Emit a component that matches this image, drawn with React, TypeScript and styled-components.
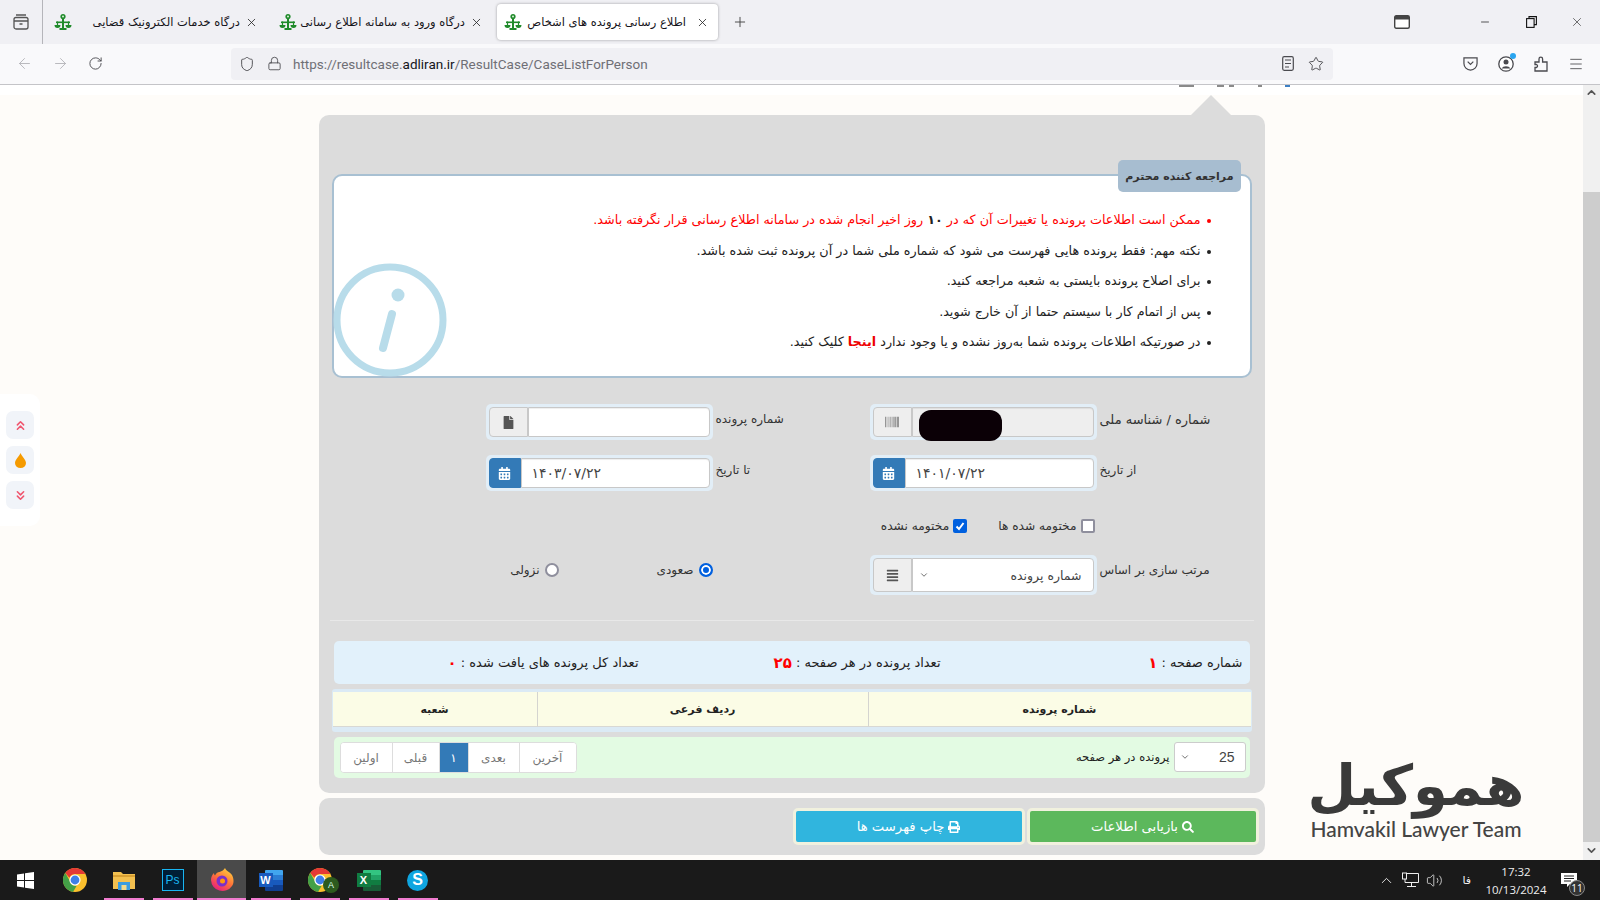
import React from "react"
import {createGlobalStyle, styled} from "styled-components"
import {
  ArrowLeft, ArrowRight, RotateCw, Shield, Lock, Star, Menu, Plus, X, Minus,
  ChevronUp, ChevronDown, ChevronsUp, ChevronsDown, Volume2,
} from "lucide-react"
import {FaBarcode, FaCalendarAlt, FaFile, FaAlignJustify, FaPrint, FaSearch} from "react-icons/fa"

const GlobalStyle = createGlobalStyle`
  html, body {
    margin: 0;
    padding: 0;
    height: 100%;
    overflow: hidden;
    font-family: "DejaVu Sans", "Liberation Sans", sans-serif;
  }
  * { box-sizing: border-box; }
`

const ScalesIcon = () => (
  <svg width="18" height="18" viewBox="0 0 18 18">
    <rect x="8" y="5" width="2" height="10" fill="#1f8a2a" />
    <circle cx="9" cy="3.5" r="2.6" fill="#1f8a2a" />
    <circle cx="9" cy="3.5" r="1" fill="#dff3df" />
    <path d="M2 8.5h14v1.6H2z" fill="#1f8a2a" />
    <path d="M0.5 12h6a3 3 0 0 1-6 0zM11.5 12h6a3 3 0 0 1-6 0z" fill="#1f8a2a" />
    <path d="M3.5 8.5v4M14.5 8.5v4" stroke="#1f8a2a" strokeWidth="1.2" />
    <rect x="5.5" y="15" width="7" height="2" fill="#1f8a2a" />
  </svg>
)

const ChromeIcon = () => (
  <svg width="24" height="24" viewBox="0 0 24 24">
    <circle cx="12" cy="12" r="12" fill="#fbc02d" />
    <path d="M12 0a12 12 0 0 1 10.4 6H12a6 6 0 0 0-5.6 3.8L2.3 5A12 12 0 0 1 12 0z" fill="#e53935" />
    <path d="M2.3 5l5 8.7a5.6 5.6 0 0 0 6.4 4.1L10 24A12 12 0 0 1 2.3 5z" fill="#43a047" />
    <circle cx="12" cy="12" r="5.6" fill="#fff" />
    <circle cx="12" cy="12" r="4.4" fill="#3f7fe8" />
  </svg>
)

const FolderIcon = () => (
  <svg width="22" height="20" viewBox="0 0 22 20">
    <path d="M0 2h8l2 2h12v15H0z" fill="#f3c04f" />
    <rect y="5" width="22" height="2" fill="#d9a033" />
    <rect x="5" y="12" width="12" height="8" fill="#3a9ce0" />
    <rect x="8.5" y="15" width="5" height="5" fill="#f3d98a" />
  </svg>
)

const FirefoxIcon = () => (
  <svg width="24" height="24" viewBox="0 0 24 24">
    <defs>
      <linearGradient id="fx" x1="0.8" y1="0" x2="0.2" y2="1">
        <stop offset="0" stopColor="#ffd43b" />
        <stop offset="0.5" stopColor="#ff7139" />
        <stop offset="1" stopColor="#e31587" />
      </linearGradient>
    </defs>
    <path d="M15 0c1 3 5 4 7 7 2 4 2 8 0 11a11.500 11.500 0 0 1-21 -6c0-3 1-5 3-7 0 1 .5 2 1 2.500C6 5 8 4 9.500 4 12 3 14 2 15 0z" fill="url(#fx)" />
    <circle cx="12" cy="13" r="5.500" fill="#7b2fc9" />
    <circle cx="12.500" cy="13" r="2.500" fill="#ff980e" />
  </svg>
)

const WordIcon = () => (
  <OfficeBox>
    <OfficeStack>
      <OfficeBand $color="#41a5ee" />
      <OfficeBand $color="#2b7cd3" />
      <OfficeBand $color="#185abd" />
      <OfficeBand $color="#103f91" />
    </OfficeStack>
    <OfficeLetter $color="#185abd">W</OfficeLetter>
  </OfficeBox>
)

const ExcelIcon = () => (
  <OfficeBox>
    <OfficeStack>
      <OfficeBand $color="#33c481" />
      <OfficeBand $color="#21a366" />
      <OfficeBand $color="#107c41" />
      <OfficeBand $color="#185c37" />
    </OfficeStack>
    <OfficeLetter $color="#107c41">X</OfficeLetter>
  </OfficeBox>
)

const CheckMark = () => (
  <svg width="10" height="10" viewBox="0 0 10 10">
    <path d="M1.500 5.500l2.500 2.500 4.500-6" fill="none" stroke="#fff" strokeWidth="2" />
  </svg>
)

const InfoMark = () => (
  <svg width="116" height="116" viewBox="0 0 116 116">
    <circle cx="58" cy="58" r="53" fill="#fff" stroke="#b8dcea" strokeWidth="7" />
    <circle cx="66" cy="33" r="6.500" fill="#b8dcea" />
    <path d="M60 52L51 86" stroke="#b8dcea" strokeWidth="8" strokeLinecap="round" />
  </svg>
)

const Tab = ({title, active}: {title: string; active?: boolean}) => (
  <TabBody $active={active}>
    <ScalesIcon />
    <TabTitle $active={active}>{title}</TabTitle>
    <X size={13} strokeWidth={1.5} color="#222" />
  </TabBody>
)

const NOTES = [
  "نکته مهم: فقط پرونده هایی فهرست می شود که شماره ملی شما در آن پرونده ثبت شده باشد.",
  "برای اصلاح پرونده بایستی به شعبه مراجعه کنید.",
  "پس از اتمام کار با سیستم حتما از آن خارج شوید.",
]

const PAGES = [
  {label: "آخرین", width: 57},
  {label: "بعدی", width: 51},
  {label: "۱", width: 29, active: true},
  {label: "قبلی", width: 47},
  {label: "اولین", width: 51},
]

// cut-off bits of the page header, right to left
const CUT_MARKS = [
  {width: 5, gap: 23, color: "#3d7fc4"},
  {width: 4, gap: 24, color: "#8a8a8a"},
  {width: 5, gap: 5, color: "#8a8a8a"},
  {width: 7, gap: 23, color: "#8a8a8a"},
  {width: 15, gap: 3, color: "#8a8a8a"},
]

export default function App() {
  return (
    <Screen>
      <GlobalStyle />
      <TabStrip>
        <SideButton>
          <svg width="16" height="16" viewBox="0 0 16 16" fill="none" stroke="#555" strokeWidth="1.300">
            <rect x="1" y="3.500" width="14" height="11.500" rx="2" />
            <path d="M3 1h10M1 7h14M6.500 10h3" />
          </svg>
        </SideButton>
        <TabPlain><Tab title="درگاه خدمات الکترونیک قضایی" /></TabPlain>
        <TabPlain $after={4}><Tab title="درگاه ورود به سامانه اطلاع رسانی" /></TabPlain>
        <Tab title="اطلاع رسانی پرونده های اشخاص" active />
        <NewTab><Plus size={16} strokeWidth={1.400} color="#444" /></NewTab>
        <WindowControls>
          <svg width="16" height="14" viewBox="0 0 16 14">
            <rect x="0.700" y="0.700" width="14.600" height="12.600" rx="1.500" fill="#fff" stroke="#444" strokeWidth="1.400" />
            <rect x="1" y="1" width="14" height="3.500" fill="#444" />
          </svg>
          <WindowButtons>
            <Minus size={12} strokeWidth={1.400} color="#111" />
            <svg width="11" height="12" viewBox="0 0 11 12" fill="none" stroke="#111" strokeWidth="1.100">
              <rect x="0.600" y="2.600" width="7.500" height="8.800" />
              <path d="M3 2.500V0.600h7.400v8H8" />
            </svg>
            <CloseSlot><X size={14} strokeWidth={1} color="#111" /></CloseSlot>
          </WindowButtons>
        </WindowControls>
      </TabStrip>

      <Toolbar>
        <NavButtons>
          <ArrowLeft size={17} strokeWidth={1.300} color="#b4b4b8" />
          <ArrowRight size={17} strokeWidth={1.300} color="#b4b4b8" />
          <RotateCw size={15} strokeWidth={1.500} color="#4a4a4f" />
        </NavButtons>
        <UrlBar>
          <Shield size={16} strokeWidth={1.400} color="#4a4a4f" />
          <Lock size={15} strokeWidth={1.400} color="#4a4a4f" />
          <UrlText>https://resultcase.<b>adliran.ir</b>/ResultCase/CaseListForPerson</UrlText>
          <UrlEnd>
            <svg width="12" height="15" viewBox="0 0 12 15" fill="none" stroke="#4a4a4f" strokeWidth="1.200">
              <rect x="0.700" y="0.700" width="10.600" height="13.600" rx="1.500" />
              <path d="M3 4h6M3 7.500h6M3 11h4" />
            </svg>
            <Star size={16} strokeWidth={1.400} color="#4a4a4f" />
          </UrlEnd>
        </UrlBar>
        <ToolIcons>
          <svg width="15" height="15" viewBox="0 0 16 16" fill="none" stroke="#4a4a4f" strokeWidth="1.300">
            <path d="M1 2h14v6a7 7 0 0 1-14 0z" />
            <path d="M5 6l3 3 3-3" />
          </svg>
          <AccountIcon>
            <svg width="16" height="16" viewBox="0 0 16 16">
              <circle cx="8" cy="8" r="7.200" fill="#fff" stroke="#4a4a4f" strokeWidth="1.300" />
              <circle cx="8" cy="6" r="2.500" fill="#4a4a4f" />
              <path d="M3.500 12.500a5 4 0 0 1 9 0z" fill="#4a4a4f" />
            </svg>
            <AccountDot />
          </AccountIcon>
          <svg width="14" height="16" viewBox="0 0 14 16" fill="none" stroke="#4a4a4f" strokeWidth="1.300">
            <path d="M1 6h4V3a1.800 1.800 0 0 1 3.600 0v3H13v9H1v-3.500h1.500a1.600 1.600 0 0 0 0-3H1z" />
          </svg>
          <Menu size={16} strokeWidth={1.300} color="#4a4a4f" />
        </ToolIcons>
      </Toolbar>

      <Viewport>
        <Page dir="rtl">
          <CutStrip>
            {CUT_MARKS.map(({width, gap, color}, i) => <CutMark key={i} $width={width} $gap={gap} $color={color} />)}
          </CutStrip>
          <Panel>
            <PanelArrow />
            <InfoBox>
              <InfoBadge>مراجعه کننده محترم</InfoBadge>
              <InfoIcon><InfoMark /></InfoIcon>
              <NoteList>
                <NoteItem $red>ممکن است اطلاعات پرونده یا تغییرات آن که در <Dark>۱۰</Dark> روز اخیر انجام شده در سامانه اطلاع رسانی قرار نگرفته باشد.</NoteItem>
                {NOTES.map((note) => <NoteItem key={note}>{note}</NoteItem>)}
                <NoteItem>در صورتیکه اطلاعات پرونده شما به‌روز نشده و یا وجود ندارد <ClickHere>اینجا</ClickHere> کلیک کنید.</NoteItem>
              </NoteList>
            </InfoBox>

            <FormRow $top={26}>
              <Field>
                <FieldLabel $width={116} $size={13}>شماره / شناسه ملی</FieldLabel>
                <InputGroup>
                  <InputValue $disabled><Redacted /></InputValue>
                  <Addon><FaBarcode size={14} color="#777" /></Addon>
                </InputGroup>
              </Field>
              <Field>
                <FieldLabel $width={70}>شماره پرونده</FieldLabel>
                <InputGroup>
                  <InputValue />
                  <Addon><FaFile size={13} color="#555" /></Addon>
                </InputGroup>
              </Field>
            </FormRow>

            <FormRow $top={15}>
              <Field>
                <FieldLabel $width={116}>از تاریخ</FieldLabel>
                <InputGroup>
                  <InputValue><DateText>۱۴۰۱/۰۷/۲۲</DateText></InputValue>
                  <Addon $blue><FaCalendarAlt size={13} color="#fff" /></Addon>
                </InputGroup>
              </Field>
              <Field>
                <FieldLabel $width={70}>تا تاریخ</FieldLabel>
                <InputGroup>
                  <InputValue><DateText>۱۴۰۳/۰۷/۲۲</DateText></InputValue>
                  <Addon $blue><FaCalendarAlt size={13} color="#fff" /></Addon>
                </InputGroup>
              </Field>
            </FormRow>

            <CheckRow>
              <CheckItem><CheckBox />مختومه شده ها</CheckItem>
              <CheckItem><CheckBox $checked><CheckMark /></CheckBox>مختومه نشده</CheckItem>
            </CheckRow>

            <FormRow $top={21}>
              <Field>
                <FieldLabel $width={116}>مرتب سازی بر اساس</FieldLabel>
                <InputGroup $tall>
                  <SelectValue>شماره پرونده<ChevronDown size={10} color="#555" /></SelectValue>
                  <Addon><FaAlignJustify size={13} color="#555" /></Addon>
                </InputGroup>
              </Field>
              <RadioRow>
                <RadioItem><Radio $on />صعودی</RadioItem>
                <RadioItem><Radio />نزولی</RadioItem>
              </RadioRow>
            </FormRow>

            <Divider />

            <SummaryBar>
              <SummaryItem $width={302}>شماره صفحه : <Count>۱</Count></SummaryItem>
              <SummaryItem $width={302}>تعداد پرونده در هر صفحه : <Count>۲۵</Count></SummaryItem>
              <SummaryItem>تعداد کل پرونده های یافت شده : <Count>۰</Count></SummaryItem>
            </SummaryBar>

            <TableWrap>
              <HeadCell $width={383}>شماره پرونده</HeadCell>
              <HeadCell $width={331}>ردیف فرعی</HeadCell>
              <HeadCell>شعبه</HeadCell>
            </TableWrap>

            <PagerBar>
              <PageSize>
                <SizeSelect>25<ChevronDown size={10} color="#555" /></SizeSelect>
                پرونده در هر صفحه
              </PageSize>
              <Pager>
                {PAGES.map(({label, width, active}) => <PageLink key={label} $width={width} $active={active}>{label}</PageLink>)}
              </Pager>
            </PagerBar>
          </Panel>

          <ButtonPanel>
            <ActionButton $color="#5cb85c"><FaSearch size={12} />بازیابی اطلاعات</ActionButton>
            <ActionButton $color="#30b5de"><FaPrint size={12} />چاپ فهرست ها</ActionButton>
          </ButtonPanel>

          <Logo dir="rtl">
            <LogoMark>هموکیل</LogoMark>
            <LogoCaption>Hamvakil Lawyer Team</LogoCaption>
          </Logo>
        </Page>

        <SideDock>
          <DockButton><ChevronsUp size={15} strokeWidth={2.500} color="#f0566f" /></DockButton>
          <DockButton>
            <svg width="11" height="17" viewBox="0 0 13 18">
              <path d="M6.500 0C8 4 13 7.500 13 12a6.500 6 0 0 1-13 0C0 7.500 5 4 6.500 0z" fill="#f59a00" />
            </svg>
          </DockButton>
          <DockButton><ChevronsDown size={15} strokeWidth={2.500} color="#f0566f" /></DockButton>
        </SideDock>

        <ScrollBar>
          <ChevronUp size={13} strokeWidth={3} color="#555" />
          <ScrollThumb />
          <ChevronDown size={13} strokeWidth={3} color="#555" />
        </ScrollBar>
      </Viewport>

      <Taskbar>
        <StartButton>
          <svg width="17" height="17" viewBox="0 0 17 17" fill="#fff">
            <path d="M0 2.500l7-1v6.500H0zM8 1.300L17 0v8H8zM0 9h7v6.500l-7-1zM8 9h9v8l-9-1.300z" />
          </svg>
        </StartButton>
        <TaskIcons>
          <TaskItem><ChromeIcon /></TaskItem>
          <TaskItem $underline><FolderIcon /></TaskItem>
          <TaskItem $underline><PsIcon>Ps</PsIcon></TaskItem>
          <TaskItem $underline $active><FirefoxIcon /></TaskItem>
          <TaskItem $underline><WordIcon /></TaskItem>
          <TaskItem $underline>
            <ChromeIcon />
            <ProfileBadge>A</ProfileBadge>
          </TaskItem>
          <TaskItem $underline><ExcelIcon /></TaskItem>
          <TaskItem $underline><SkypeIcon>S</SkypeIcon></TaskItem>
        </TaskIcons>
        <Tray>
          <ChevronUp size={17} strokeWidth={1.300} color="#eee" />
          <svg width="17" height="16" viewBox="0 0 17 16" fill="none" stroke="#eee" strokeWidth="1">
            <path d="M3 1.500h13.500v9H3zM9.500 10.500v3.500M5 14.500h9" />
            <rect x="0.500" y="1" width="4" height="6" fill="#1a1a1a" />
          </svg>
          <Volume2 size={17} strokeWidth={1.100} color="#eee" />
          <Lang dir="rtl">فا</Lang>
          <Clock>
            <span>17:32</span>
            <span>10/13/2024</span>
          </Clock>
          <Notice>
            <svg width="16" height="14" viewBox="0 0 16 14">
              <path d="M0 0h16v11H9l-3 3v-3H0z" fill="#fff" />
              <path d="M3 3h10M3 5.500h10M3 8h7" stroke="#222" strokeWidth="1" />
            </svg>
            <NoticeCount>11</NoticeCount>
          </Notice>
        </Tray>
      </Taskbar>
    </Screen>
  )
}

const Screen = styled.div`
  width: 1600px;
  height: 900px;
  display: flex;
  flex-direction: column;
  overflow: hidden;
  background: #fefcf9;
`

const TabStrip = styled.div`
  height: 44px;
  flex: none;
  display: flex;
  align-items: center;
  background: #f0f0f4;
`

const SideButton = styled.div`
  width: 43px;
  height: 44px;
  flex: none;
  display: flex;
  align-items: center;
  justify-content: center;
  border-right: 1px solid #b5b5ba;
`

const TabPlain = styled.div<{$after?: number}>`
  width: 225px;
  flex: none;
  margin-right: ${({$after}) => $after ?? 0}px;
  & > div { width: 100%; }
`

const TabBody = styled.div<{$active?: boolean}>`
  width: 221px;
  height: 36px;
  flex: none;
  display: flex;
  align-items: center;
  padding: ${({$active}) => ($active ? "0 9px 0 7px" : "0 10px 0 11px")};
  column-gap: 5px;
  border-radius: 4px;
  background: ${({$active}) => ($active ? "#fff" : "transparent")};
  box-shadow: ${({$active}) => ($active ? "0 0 3px rgba(0,0,0,.35)" : "none")};
`

const TabTitle = styled.div<{$active?: boolean}>`
  flex: 1;
  min-width: 0;
  font-size: 11.500px;
  color: #15141a;
  white-space: nowrap;
  direction: rtl;
  text-align: right;
  margin-right: ${({$active}) => ($active ? 5 : 0)}px;
`

const NewTab = styled.div`
  width: 44px;
  display: flex;
  justify-content: center;
`

const WindowControls = styled.div`
  margin-left: auto;
  display: flex;
  align-items: center;
  column-gap: 69px;
  padding-right: 16px;
`

const WindowButtons = styled.div`
  display: flex;
  align-items: center;
  column-gap: 35px;
`

const CloseSlot = styled.div`
  display: flex;
  margin-left: -2px;
`

const Toolbar = styled.div`
  height: 41px;
  flex: none;
  display: flex;
  align-items: center;
  background: #f9f9fb;
  border-bottom: 1px solid #c4c4c8;
  padding-bottom: 1px;
`

const NavButtons = styled.div`
  width: 231px;
  flex: none;
  display: flex;
  align-items: center;
  column-gap: 19px;
  padding-left: 16px;
`

const UrlBar = styled.div`
  width: 1102px;
  height: 32px;
  flex: none;
  display: flex;
  align-items: center;
  column-gap: 12px;
  padding: 0 9px 0 8px;
  border-radius: 4px;
  background: #f0f0f4;
`

const UrlText = styled.div`
  font-family: Roboto, "Liberation Sans", sans-serif;
  font-size: 13.500px;
  color: #6f6f76;
  margin-left: -1px;
  b { font-weight: 400; color: #15141a; }
`

const UrlEnd = styled.div`
  margin-left: auto;
  display: flex;
  align-items: center;
  column-gap: 14px;
`

const ToolIcons = styled.div`
  flex: 1;
  display: flex;
  align-items: center;
  justify-content: flex-end;
  column-gap: 20px;
  padding-right: 16px;
`

const AccountIcon = styled.div`
  position: relative;
  display: flex;
`

const AccountDot = styled.div`
  position: absolute;
  top: -3px;
  right: -2px;
  width: 6px;
  height: 6px;
  border-radius: 50%;
  background: #2aa5f0;
`

const Viewport = styled.div`
  flex: 1;
  position: relative;
  display: flex;
  min-height: 0;
`

const Page = styled.div`
  flex: 1;
  position: relative;
  display: flex;
  flex-direction: column;
  align-items: center;
  min-width: 0;
`

const CutStrip = styled.div`
  align-self: stretch;
  height: 10px;
  flex: none;
  display: flex;
  align-items: flex-start;
  padding-right: 293px;
  background: #fff;
`

const CutMark = styled.div<{$width: number; $gap: number; $color: string}>`
  width: ${({$width}) => $width}px;
  height: 2px;
  margin-left: ${({$gap}) => $gap}px;
  background: ${({$color}) => $color};
`

const Panel = styled.div`
  width: 946px;
  flex: none;
  position: relative;
  margin-top: 20px;
  height: 678px;
  padding: 59px 13px 0;
  border-radius: 10px;
  background: #dcdcdc;
`

const PanelArrow = styled.div`
  position: absolute;
  top: -20px;
  right: 34px;
  width: 0;
  height: 0;
  border-left: 20px solid transparent;
  border-right: 20px solid transparent;
  border-bottom: 20px solid #dcdcdc;
`

const InfoBox = styled.div`
  position: relative;
  height: 204px;
  padding-top: 29px;
  border: 2px solid #a8c0d2;
  border-radius: 10px;
  background: #fff;
`

const InfoBadge = styled.div`
  position: absolute;
  top: -16px;
  right: 9px;
  height: 32px;
  display: flex;
  align-items: center;
  padding: 0 7px;
  border-radius: 5px;
  background: #a7bdd0;
  color: #333;
  font-size: 11px;
  font-weight: 700;
`

const InfoIcon = styled.div`
  position: absolute;
  left: -2px;
  bottom: -2px;
  display: flex;
`

const NoteList = styled.ul`
  position: relative;
  margin: 0;
  padding: 0 49px 0 0;
  list-style: none;
`

const NoteItem = styled.li<{$red?: boolean}>`
  position: relative;
  height: 30.500px;
  line-height: 30.500px;
  font-size: 12.750px;
  color: ${({$red}) => ($red ? "#f00" : "#222")};
  white-space: nowrap;

  &::before {
    content: "";
    position: absolute;
    right: -10px;
    top: 14px;
    width: 4px;
    height: 4px;
    border-radius: 50%;
    background: ${({$red}) => ($red ? "#f00" : "#222")};
  }
`

const Dark = styled.b`
  color: #222;
`

const ClickHere = styled.b`
  color: #e00;
`

const FormRow = styled.div<{$top: number}>`
  display: flex;
  align-items: flex-start;
  column-gap: 87px;
  margin-top: ${({$top}) => $top}px;
  padding-right: 39px;
`

const Field = styled.div`
  display: flex;
  align-items: flex-start;
`

const FieldLabel = styled.div<{$width: number; $size?: number}>`
  width: ${({$width}) => $width}px;
  flex: none;
  display: flex;
  align-items: center;
  justify-content: flex-end;
  height: 30px;
  padding-left: 3px;
  white-space: nowrap;
  color: #333;
  font-size: ${({$size}) => $size ?? 12}px;
`

const InputGroup = styled.div<{$tall?: boolean}>`
  width: 227px;
  flex: none;
  display: flex;
  height: ${({$tall}) => ($tall ? 40 : 36)}px;
  padding: 3px;
  border-radius: 5px;
  background: #e2eef7;
`

const Addon = styled.div<{$blue?: boolean}>`
  width: ${({$blue}) => ($blue ? 32 : 39)}px;
  flex: none;
  display: flex;
  align-items: center;
  justify-content: center;
  border: 1px solid ${({$blue}) => ($blue ? "#337ab7" : "#c8c8c8")};
  border-radius: 4px 0 0 4px;
  background: ${({$blue}) => ($blue ? "#337ab7" : "#eeeeee")};
`

const InputValue = styled.div<{$disabled?: boolean}>`
  flex: 1;
  position: relative;
  display: flex;
  align-items: center;
  justify-content: flex-end;
  border: 1px solid #c8c8c8;
  border-right-color: #c8c8c8;
  border-radius: 0 4px 4px 0;
  background: ${({$disabled}) => ($disabled ? "#eeeeee" : "#fff")};
  box-shadow: inset 0 1px 1px rgba(0, 0, 0, .07);
`

const Redacted = styled.div`
  position: absolute;
  top: 2px;
  left: 6px;
  width: 83px;
  height: 31px;
  border-radius: 12px;
  background: #0b0006;
`

const DateText = styled.div`
  padding-left: 10px;
  font-size: 14px;
  color: #444;
`

const CheckRow = styled.div`
  display: flex;
  column-gap: 31px;
  margin-top: 28px;
  padding-right: 157px;
  color: #333;
  font-size: 12.200px;
`

const CheckItem = styled.label`
  display: flex;
  align-items: flex-start;
  column-gap: 4px;
  line-height: 15px;
  white-space: nowrap;
`

const CheckBox = styled.span<{$checked?: boolean}>`
  width: 14px;
  height: 14px;
  display: flex;
  align-items: center;
  justify-content: center;
  border: ${({$checked}) => ($checked ? "none" : "2px solid #8f8f9d")};
  border-radius: 2px;
  background: ${({$checked}) => ($checked ? "#0060df" : "#fff")};
`

const SelectValue = styled.div`
  flex: 1;
  display: flex;
  align-items: center;
  justify-content: space-between;
  padding: 0 11px 0 6px;
  border: 1px solid #c8c8c8;
  border-radius: 0 4px 4px 0;
  background: #fff;
  font-size: 12.500px;
  color: #444;
`

const RadioRow = styled.div`
  margin-right: 70px;
  display: flex;
  column-gap: 98px;
  padding-top: 8px;
  color: #333;
  font-size: 12px;
`

const RadioItem = styled.label`
  display: flex;
  align-items: flex-start;
  column-gap: 5px;
  line-height: 15px;
`

const Radio = styled.span<{$on?: boolean}>`
  width: 14px;
  height: 14px;
  flex: none;
  border-radius: 50%;
  border: ${({$on}) => ($on ? "2px solid #0060df" : "2px solid #8f8f9d")};
  background: ${({$on}) => ($on ? "#0060df" : "#fff")};
  box-shadow: ${({$on}) => ($on ? "inset 0 0 0 2px #fff" : "none")};
`

const Divider = styled.div`
  height: 1px;
  margin: 25px -2px 0 -2px;
  background: #e8e8e8;
`

const SummaryBar = styled.div`
  height: 43px;
  margin: 20px 2px 0 2px;
  padding: 0 7px 0 0;
  display: flex;
  align-items: center;
  border-radius: 5px;
  background: #e2f1fb;
  font-size: 13px;
  color: #222;
`

const SummaryItem = styled.div<{$width?: number}>`
  width: ${({$width}) => ($width ? `${$width}px` : "auto")};
  flex: none;
  display: flex;
  align-items: center;
  white-space: pre;
`

const Count = styled.b`
  color: #f00;
  font-size: 15px;
`

const TableWrap = styled.div`
  height: 43px;
  margin: 5px 0 0 0;
  padding: 3px 1px 5px 1px;
  display: flex;
  border-radius: 3px;
  background: #dbeaf5;
`

const HeadCell = styled.div<{$width?: number}>`
  flex: ${({$width}) => ($width ? `0 0 ${$width}px` : 1)};
  display: flex;
  align-items: center;
  justify-content: center;
  border-left: 1px solid #d4d4d0;
  border-bottom: 1px solid #d8d8d4;
  background: #fbfce6;
  font-size: 11px;
  font-weight: 700;
  color: #222;

  &:last-child { border-left: none; }
`

const PagerBar = styled.div`
  height: 41px;
  margin: 5px 2px 0 2px;
  padding: 5px 4px 0 6px;
  display: flex;
  justify-content: space-between;
  border-radius: 5px;
  background: #e3fbe3;
`

const PageSize = styled.div`
  display: flex;
  align-items: center;
  column-gap: 4px;
  height: 30px;
  font-size: 11.500px;
  color: #222;
`

const SizeSelect = styled.div`
  width: 72px;
  height: 30px;
  display: flex;
  align-items: center;
  justify-content: space-between;
  padding: 0 10px 0 5px;
  border: 1px solid #ccc;
  border-radius: 3px;
  background: #fff;
  font-family: "Liberation Sans", sans-serif;
  font-size: 14px;
  color: #444;
`

const Pager = styled.div`
  height: 31px;
  display: flex;
  overflow: hidden;
  border: 1px solid #ddd;
  border-radius: 4px;
  background: #fff;
`

const PageLink = styled.div<{$width: number; $active?: boolean}>`
  width: ${({$width}) => $width}px;
  display: flex;
  align-items: center;
  justify-content: center;
  border-left: 1px solid #ddd;
  background: ${({$active}) => ($active ? "#337ab7" : "#fff")};
  color: ${({$active}) => ($active ? "#fff" : "#777")};
  font-size: 12px;

  &:last-child { border-left: none; }
`

const ButtonPanel = styled.div`
  width: 946px;
  height: 57px;
  flex: none;
  margin-top: 5px;
  padding: 10px 6px 0 0;
  display: flex;
  column-gap: 2px;
  border-radius: 10px;
  background: #dcdcdc;
`

const ActionButton = styled.div<{$color: string}>`
  width: 232px;
  height: 37px;
  display: flex;
  align-items: center;
  justify-content: center;
  column-gap: 4px;
  border: 3px solid #f1f1de;
  border-radius: 5px;
  background: ${({$color}) => $color};
  color: #fff;
  font-size: 13.200px;
`

const Logo = styled.div`
  position: absolute;
  left: 1310px;
  top: 670px;
  width: 212px;
  display: flex;
  flex-direction: column;
  align-items: center;
`

const LogoMark = styled.div`
  font-family: "DejaVu Sans", sans-serif;
  font-size: 56px;
  line-height: 62px;
  font-weight: 700;
  color: #3a3a3a;
  white-space: nowrap;
`

const LogoCaption = styled.div`
  font-family: "Lato", "Liberation Sans", sans-serif;
  font-size: 21px;
  font-weight: 500;
  line-height: 24px;
  color: #444;
  white-space: nowrap;
  direction: ltr;
`

const SideDock = styled.div`
  position: absolute;
  left: 0;
  top: 309px;
  width: 40px;
  height: 132px;
  display: flex;
  flex-direction: column;
  align-items: center;
  row-gap: 7px;
  padding-top: 17px;
  border-radius: 0 10px 10px 0;
  background: #fff;
`

const DockButton = styled.div`
  width: 28px;
  height: 28px;
  display: flex;
  align-items: center;
  justify-content: center;
  border-radius: 7px;
  background: #f1f4f9;
`

const ScrollBar = styled.div`
  width: 17px;
  flex: none;
  display: flex;
  flex-direction: column;
  align-items: center;
  padding-top: 1px;
  background: #f0f0f0;
`

const ScrollThumb = styled.div`
  width: 17px;
  height: 650px;
  margin: 93px 0 2px;
  flex: none;
  background: #cdcdcd;
`

const Taskbar = styled.div`
  height: 40px;
  flex: none;
  display: flex;
  align-items: stretch;
  background: #1a1a1a;
`

const StartButton = styled.div`
  width: 50px;
  display: flex;
  align-items: center;
  justify-content: center;
`

const TaskIcons = styled.div`
  display: flex;
`

const TaskItem = styled.div<{$underline?: boolean; $active?: boolean}>`
  position: relative;
  width: 49px;
  display: flex;
  align-items: center;
  justify-content: center;
  background: ${({$active}) => ($active ? "#4a4a4a" : "transparent")};

  &::after {
    content: "";
    display: ${({$underline}) => ($underline ? "block" : "none")};
    position: absolute;
    bottom: 0;
    left: ${({$active}) => ($active ? 0 : 5)}px;
    right: ${({$active}) => ($active ? 0 : 4)}px;
    height: 2px;
    background: #f07cd0;
  }
`

const PsIcon = styled.div`
  width: 22px;
  height: 22px;
  display: flex;
  align-items: center;
  justify-content: center;
  border: 1.500px solid #19b5f1;
  background: #001e36;
  color: #19b5f1;
  font-family: "Liberation Sans", sans-serif;
  font-size: 12px;
`

const OfficeBox = styled.div`
  position: relative;
  width: 24px;
  height: 21px;
  display: flex;
  justify-content: flex-end;
`

const OfficeStack = styled.div`
  width: 18px;
  height: 21px;
  display: flex;
  flex-direction: column;
  overflow: hidden;
  border-radius: 1px;
`

const OfficeBand = styled.div<{$color: string}>`
  flex: 1;
  background: ${({$color}) => $color};
`

const OfficeLetter = styled.div<{$color: string}>`
  position: absolute;
  left: 0;
  top: 3px;
  width: 14px;
  height: 14px;
  display: flex;
  align-items: center;
  justify-content: center;
  background: ${({$color}) => $color};
  color: #fff;
  font-family: "Liberation Sans", sans-serif;
  font-size: 11px;
  font-weight: 700;
`

const SkypeIcon = styled.div`
  width: 21px;
  height: 21px;
  display: flex;
  align-items: center;
  justify-content: center;
  border-radius: 50%;
  background: #0fa5e0;
  color: #fff;
  font-family: "Liberation Sans", sans-serif;
  font-size: 16px;
  font-weight: 700;
`

const ProfileBadge = styled.div`
  position: absolute;
  left: 28px;
  top: 17px;
  width: 16px;
  height: 16px;
  display: flex;
  align-items: center;
  justify-content: center;
  border-radius: 50%;
  background: #2d5a1e;
  color: #dfe;
  font-family: "Liberation Sans", sans-serif;
  font-size: 9px;
`

const Tray = styled.div`
  margin-left: auto;
  display: flex;
  align-items: center;
  column-gap: 7px;
  padding-right: 15px;
`

const Lang = styled.div`
  margin: 0 0 0 12px;
  color: #eee;
  font-size: 11px;
`

const Clock = styled.div`
  width: 76px;
  display: flex;
  flex-direction: column;
  align-items: center;
  row-gap: 3px;
  font-family: "Open Sans", "Liberation Sans", sans-serif;
  font-size: 11.500px;
  line-height: 15px;
  color: #eee;
`

const Notice = styled.div`
  position: relative;
  width: 24px;
  display: flex;
`

const NoticeCount = styled.div`
  position: absolute;
  left: 8px;
  top: 7px;
  width: 16px;
  height: 16px;
  display: flex;
  align-items: center;
  justify-content: center;
  border: 1px solid #888;
  border-radius: 50%;
  background: #333;
  color: #fff;
  font-family: "Open Sans", sans-serif;
  font-size: 10px;
`
